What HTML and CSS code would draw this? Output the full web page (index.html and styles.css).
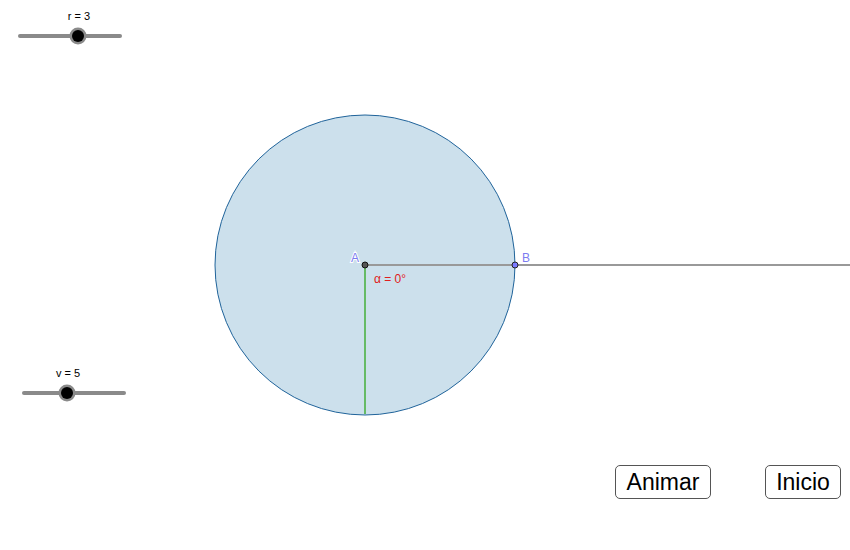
FILE: index.html
```html
<!DOCTYPE html>
<html>
<head>
<meta charset="utf-8">
<link rel="stylesheet" href="styles.css">
</head>
<body>
<div class="stage">
  <svg class="canvas" width="850" height="550" viewBox="0 0 850 550">
    <circle cx="365" cy="265" r="150" fill="#cce0ec" stroke="#1f639a" stroke-width="1"/>
    <line x1="365" y1="265" x2="850" y2="265" stroke="#999" stroke-width="2"/>
    <line x1="365" y1="265" x2="365" y2="414" stroke="#66bb66" stroke-width="2"/>
    <circle cx="365" cy="265" r="3" fill="#555" stroke="#111" stroke-width="1"/>
    <circle cx="515" cy="265" r="3" fill="#7b7bff" stroke="#222" stroke-width="1"/>
    <text x="351" y="262" class="lbl pt">A</text>
    <text x="522" y="262" class="lbl pt">B</text>
    <text x="374" y="283" class="lbl ang">α = 0°</text>

    <line x1="20" y1="36" x2="120" y2="36" stroke="#8a8a8a" stroke-width="4" stroke-linecap="round"/>
    <circle cx="78" cy="36" r="8.5" fill="#8a8a8a"/>
    <circle cx="78" cy="36" r="6" fill="#000"/>
    <text x="79" y="20" class="lbl sl">r = 3</text>

    <line x1="24" y1="393" x2="124" y2="393" stroke="#8a8a8a" stroke-width="4" stroke-linecap="round"/>
    <circle cx="67" cy="393" r="8.5" fill="#8a8a8a"/>
    <circle cx="67" cy="393" r="6" fill="#000"/>
    <text x="68" y="377" class="lbl sl">v = 5</text>
  </svg>
  <button class="btn btn-animar">Animar</button>
  <button class="btn btn-inicio">Inicio</button>
</div>
</body>
</html>
```
FILE: styles.css
```css
html, body {
  margin: 0;
  padding: 0;
  background: #fff;
  font-family: "Liberation Sans", Arial, sans-serif;
}
.stage {
  position: relative;
  width: 850px;
  height: 550px;
  overflow: hidden;
}
.canvas {
  display: block;
}
.lbl {
  font-family: "Liberation Sans", Arial, sans-serif;
}
.pt {
  font-size: 12px;
  fill: #7c7cf0;
  stroke: #fff;
  stroke-width: 2px;
  paint-order: stroke;
}
.ang {
  font-size: 12px;
  fill: #e02020;
}
.sl {
  font-size: 11px;
  fill: #000;
  text-anchor: middle;
}
.btn {
  position: absolute;
  top: 465px;
  height: 34px;
  padding: 0;
  background: #fff;
  border: 1px solid #555;
  border-radius: 5px;
  font-family: "Liberation Sans", Arial, sans-serif;
  font-size: 23px;
  color: #000;
  line-height: 32px;
}
.btn-animar {
  left: 615px;
  width: 96px;
}
.btn-inicio {
  left: 765px;
  width: 76px;
}
```
